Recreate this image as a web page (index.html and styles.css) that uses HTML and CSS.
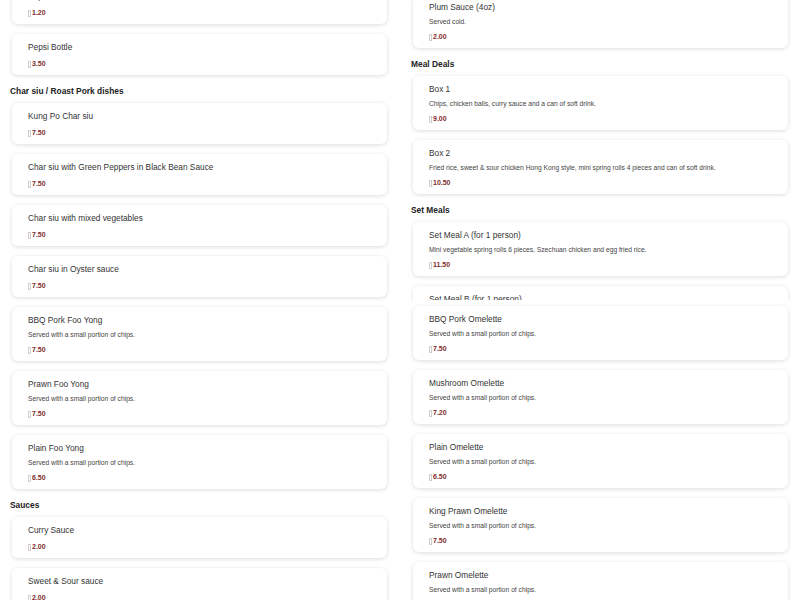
FILE: index.html
```html
<!DOCTYPE html>
<html lang="en">
<head>
<meta charset="UTF-8" />
<meta name="viewport" content="width=device-width, initial-scale=1.0" />
<title>Menu</title>
<link rel="stylesheet" href="styles.css">
</head>
<body>

<div class="menu">
  <div class="col col-left">
    <div class="card">
      <div class="name">Pepsi Can</div>
      <div class="price"><span class="cur"></span>1.20</div>
    </div>
    <div class="card">
      <div class="name">Pepsi Bottle</div>
      <div class="price"><span class="cur"></span>3.50</div>
    </div>

    <h2>Char siu / Roast Pork dishes</h2>
    <div class="card">
      <div class="name">Kung Po Char siu</div>
      <div class="price"><span class="cur"></span>7.50</div>
    </div>
    <div class="card">
      <div class="name">Char siu with Green Peppers in Black Bean Sauce</div>
      <div class="price"><span class="cur"></span>7.50</div>
    </div>
    <div class="card">
      <div class="name">Char siu with mixed vegetables</div>
      <div class="price"><span class="cur"></span>7.50</div>
    </div>
    <div class="card">
      <div class="name">Char siu in Oyster sauce</div>
      <div class="price"><span class="cur"></span>7.50</div>
    </div>
    <div class="card">
      <div class="name">BBQ Pork Foo Yong</div>
      <div class="desc">Served with a small portion of chips.</div>
      <div class="price"><span class="cur"></span>7.50</div>
    </div>
    <div class="card">
      <div class="name">Prawn Foo Yong</div>
      <div class="desc">Served with a small portion of chips.</div>
      <div class="price"><span class="cur"></span>7.50</div>
    </div>
    <div class="card">
      <div class="name">Plain Foo Yong</div>
      <div class="desc">Served with a small portion of chips.</div>
      <div class="price"><span class="cur"></span>6.50</div>
    </div>

    <h2>Sauces</h2>
    <div class="card">
      <div class="name">Curry Sauce</div>
      <div class="price"><span class="cur"></span>2.00</div>
    </div>
    <div class="card">
      <div class="name">Sweet &amp; Sour sauce</div>
      <div class="price"><span class="cur"></span>2.00</div>
    </div>
  </div>

  <div class="col col-right">
    <div class="card">
      <div class="name">Plum Sauce (4oz)</div>
      <div class="desc">Served cold.</div>
      <div class="price"><span class="cur"></span>2.00</div>
    </div>

    <h2>Meal Deals</h2>
    <div class="card">
      <div class="name">Box 1</div>
      <div class="desc">Chips, chicken balls, curry sauce and a can of soft drink.</div>
      <div class="price"><span class="cur"></span>9.00</div>
    </div>
    <div class="card">
      <div class="name">Box 2</div>
      <div class="desc">Fried rice, sweet &amp; sour chicken Hong Kong style, mini spring rolls 4 pieces and can of soft drink.</div>
      <div class="price"><span class="cur"></span>10.50</div>
    </div>

    <h2>Set Meals</h2>
    <div class="card">
      <div class="name">Set Meal A (for 1 person)</div>
      <div class="desc">Mini vegetable spring rolls 6 pieces, Szechuan chicken and egg fried rice.</div>
      <div class="price"><span class="cur"></span>11.50</div>
    </div>
    <div class="cut">
      <div class="card">
        <div class="name">Set Meal B (for 1 person)</div>
      </div>
    </div>
    <div class="card">
      <div class="name">BBQ Pork Omelette</div>
      <div class="desc">Served with a small portion of chips.</div>
      <div class="price"><span class="cur"></span>7.50</div>
    </div>
    <div class="card">
      <div class="name">Mushroom Omelette</div>
      <div class="desc">Served with a small portion of chips.</div>
      <div class="price"><span class="cur"></span>7.20</div>
    </div>
    <div class="card">
      <div class="name">Plain Omelette</div>
      <div class="desc">Served with a small portion of chips.</div>
      <div class="price"><span class="cur"></span>6.50</div>
    </div>
    <div class="card">
      <div class="name">King Prawn Omelette</div>
      <div class="desc">Served with a small portion of chips.</div>
      <div class="price"><span class="cur"></span>7.50</div>
    </div>
    <div class="card">
      <div class="name">Prawn Omelette</div>
      <div class="desc">Served with a small portion of chips.</div>
      <div class="price"><span class="cur"></span>7.50</div>
    </div>
  </div>
</div>

</body>
</html>
```

FILE: styles.css
```css
html, body {
  overflow: hidden;
}
body {
  margin: 0;
  background: #fff;
  font-family: "Liberation Sans", Arial, sans-serif;
  color: #333;
}
.menu {
  display: grid;
  grid-template-columns: 1fr 1fr;
  column-gap: 22px;
  padding: 0 10px;
  align-items: start;
}
.col {
  display: flex;
  flex-direction: column;
  gap: 10px;
}
.col-left {
  margin-top: -17px;
}
.col-right {
  margin-top: -6px;
}
h2 {
  margin: 0.5px 0 -2.5px;
  height: 10px;
  font-size: 8.4px;
  line-height: 10px;
  font-weight: bold;
  color: #222;
}
.card {
  margin: 0 2px;
  padding: 8px 16px 7px;
  background: #fff;
  border-radius: 6px;
  box-shadow: 0 1px 4px rgba(0, 0, 0, 0.14);
}
.name {
  height: 10px;
  font-size: 8.3px;
  line-height: 10px;
  color: #333;
  white-space: nowrap;
}
.desc {
  height: 9px;
  margin-top: 5px;
  font-size: 6.7px;
  line-height: 9px;
  color: #444;
  white-space: nowrap;
}
.price {
  display: flex;
  align-items: center;
  height: 8px;
  margin-top: 7px;
  font-size: 7px;
  line-height: 8px;
  font-weight: bold;
  color: #7f2c2c;
}
.name + .price {
  margin-top: 8px;
}
.cur {
  width: 1px;
  height: 5px;
  margin-right: 1px;
  border: 1px solid #d3cccc;
}
.cut {
  height: 14px;
  margin: -2px -4px -4px;
  padding: 2px 4px 0;
  overflow: hidden;
}
```
